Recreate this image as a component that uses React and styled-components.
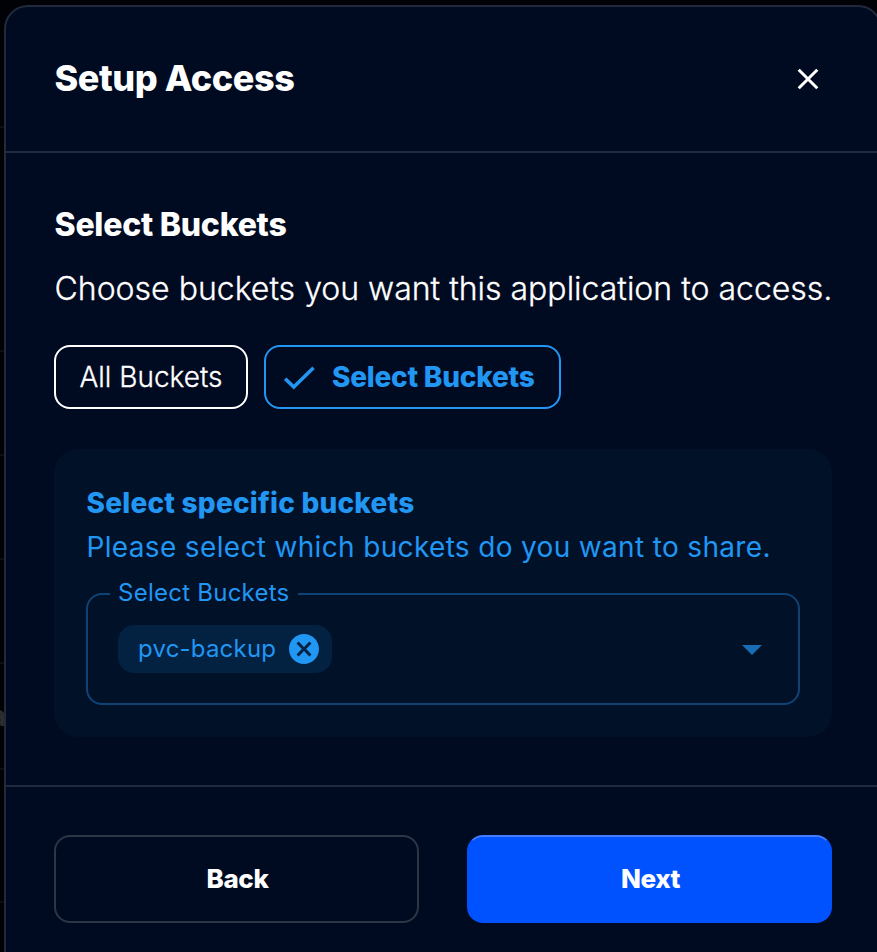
import React from "react";
import styled, { createGlobalStyle } from "styled-components";

const Global = createGlobalStyle`
  * { box-sizing: border-box; }
  html, body { margin: 0; background: #000205; overflow: hidden; }
  body { font-family: Inter, "Liberation Sans", sans-serif; color: #fff; }
`;

const Page = styled.div`
  position: relative;
  width: 877px;
  height: 952px;
  padding: 5px 0 0 4px;
  overflow: hidden;
  background: #000205;
`;

const Backdrop = styled.div`
  position: absolute;
  inset: 0 auto 0 0;
  width: 12px;
  overflow: hidden;
`;

const BackdropRule = styled.div`
  position: absolute;
  top: ${(p) => p.$top}px;
  width: 100%;
  height: 2px;
  background: #0b0d10;
`;

const BackdropText = styled.span`
  position: absolute;
  right: 6px;
  top: 700px;
  font-size: 28px;
  line-height: 32px;
  font-weight: 700;
  color: #2c2d2e;
`;

const Dialog = styled.section`
  position: relative;
  display: flex;
  flex-direction: column;
  width: 878px;
  height: 1010px;
  border: 2px solid #20293d;
  border-radius: 24px;
  background: #000a20;
`;

const Header = styled.header`
  display: flex;
  align-items: center;
  justify-content: space-between;
  height: 146px;
  padding: 0 48px;
  border-bottom: 2px solid #20293d;
`;

const Title = styled.h2`
  margin: 0;
  padding: 0 0 2px 0.5px;
  font-size: 36px;
  line-height: 48px;
  font-weight: 800;
  letter-spacing: -0.44px;
`;

const CloseButton = styled.button`
  display: flex;
  align-items: center;
  justify-content: center;
  width: 48px;
  height: 48px;
  padding: 0;
  border: 0;
  background: none;
  color: #fff;
`;

const Body = styled.div`
  height: 634px;
  padding: 48px;
  border-bottom: 2px solid #20293d;
`;

const Heading = styled.h3`
  margin: 0;
  padding-left: 0.5px;
  font-size: 32px;
  line-height: 48px;
  font-weight: 800;
  letter-spacing: -0.24px;
`;

const Lead = styled.p`
  margin: 16px 0 0;
  padding-left: 0.5px;
  font-size: 32px;
  line-height: 48px;
  font-weight: 300;
  -webkit-text-stroke: 0.3px currentColor;
  white-space: nowrap;
`;

const Options = styled.div`
  display: flex;
  gap: 16px;
  margin-top: 32px;
`;

const Option = styled.button`
  display: flex;
  align-items: center;
  justify-content: ${(p) => (p.$selected ? "flex-start" : "center")};
  width: ${(p) => (p.$selected ? 297 : 194)}px;
  height: 64px;
  padding: ${(p) => (p.$selected ? "0 0 0 12px" : "0")};
  gap: 12px;
  border: 2px solid ${(p) => (p.$selected ? "#2196f3" : "#fff")};
  border-radius: 16px;
  background: none;
  font: ${(p) => (p.$selected ? 800 : 300)} 28px Inter, sans-serif;
  -webkit-text-stroke: ${(p) => (p.$selected ? "0" : "0.3px currentColor")};
  letter-spacing: ${(p) => (p.$selected ? "-0.24px" : "0")};
  color: ${(p) => (p.$selected ? "#2196f3" : "#fff")};
  white-space: nowrap;
`;

const Panel = styled.div`
  height: 288px;
  margin-top: 40px;
  padding: 32px;
  border-radius: 24px;
  background: #001128;
  color: #2196f3;
`;

const PanelTitle = styled.h4`
  margin: 0;
  padding-left: 0.5px;
  font-size: 28px;
  line-height: 44px;
  font-weight: 800;
  letter-spacing: 0.22px;
`;

const PanelText = styled.p`
  margin: 0;
  padding-left: 0.5px;
  font-size: 28px;
  line-height: 44px;
  letter-spacing: 0.34px;
  white-space: nowrap;
`;

const Field = styled.fieldset`
  display: flex;
  align-items: center;
  justify-content: space-between;
  min-width: 0;
  height: 125px;
  margin: 11px 0 0;
  padding: 0 36px 14px 30px;
  border: 2px solid #0f4376;
  border-radius: 16px;
`;

const Legend = styled.legend`
  height: 28px;
  margin-left: -8px;
  padding: 0 8px;
  width: 188px;
  white-space: nowrap;
  font-size: 24px;
  line-height: 26px;
  letter-spacing: 0.25px;
`;

const Tag = styled.span`
  display: flex;
  align-items: center;
  justify-content: space-between;
  width: 214px;
  height: 48px;
  padding: 0 10px 0 20px;
  border-radius: 16px;
  background: #032140;
  font-size: 24px;
  letter-spacing: 0.2px;
`;

const TagLabel = styled.span`
  padding-bottom: 1px;
`;

const Footer = styled.footer`
  display: flex;
  gap: 48px;
  padding: 48px;
`;

const Action = styled.button`
  flex: 1;
  height: 88px;
  padding: 0 0 2px 2px;
  border: 2px solid ${(p) => (p.$primary ? "#0052ff" : "#2d3646")};
  border-top-color: ${(p) => (p.$primary ? "#407dff" : "#2d3646")};
  border-radius: 16px;
  background: ${(p) => (p.$primary ? "#0052ff" : "transparent")};
  font: 800 26px Inter, sans-serif;
  letter-spacing: -0.4px;
  color: #fff;
`;

const CloseIcon = () => (
  <svg width="24" height="24" viewBox="0 0 24 24" fill="none" stroke="currentColor" strokeWidth="3">
    <path d="M2.7 2.7 21.3 21.3M21.3 2.7 2.7 21.3" />
  </svg>
);

const CheckIcon = () => (
  <svg width="42" height="41" viewBox="0 0 24 24" fill="currentColor" preserveAspectRatio="none">
    <path d="M9 16.17 4.83 12l-1.42 1.41L9 19 21 7l-1.41-1.41z" />
  </svg>
);

const RemoveIcon = () => (
  <svg width="36" height="36" viewBox="0 0 24 24" fill="currentColor">
    <path d="M12 2C6.47 2 2 6.47 2 12s4.47 10 10 10 10-4.47 10-10S17.53 2 12 2zm5 13.59L15.59 17 12 13.41 8.41 17 7 15.59 10.59 12 7 8.41 8.41 7 12 10.59 15.59 7 17 8.41 13.41 12 17 15.59z" />
  </svg>
);

const CaretIcon = () => (
  <svg width="20" height="12" viewBox="0 0 20 12" fill="#196db4">
    <path d="M0 2h20L10 12z" />
  </svg>
);

const rules = [126, 350, 454, 558, 662, 768, 901];

export default function App() {
  return (
    <Page>
      <Global />
      <Backdrop>
        {rules.map((top) => (
          <BackdropRule key={top} $top={top} />
        ))}
        <BackdropText>a</BackdropText>
      </Backdrop>
      <Dialog>
        <Header>
          <Title>Setup Access</Title>
          <CloseButton aria-label="Close">
            <CloseIcon />
          </CloseButton>
        </Header>
        <Body>
          <Heading>Select Buckets</Heading>
          <Lead>Choose buckets you want this application to access.</Lead>
          <Options>
            <Option>All Buckets</Option>
            <Option $selected>
              <CheckIcon />
              Select Buckets
            </Option>
          </Options>
          <Panel>
            <PanelTitle>Select specific buckets</PanelTitle>
            <PanelText>Please select which buckets do you want to share.</PanelText>
            <Field>
              <Legend>Select Buckets</Legend>
              <Tag>
                <TagLabel>pvc-backup</TagLabel>
                <RemoveIcon />
              </Tag>
              <CaretIcon />
            </Field>
          </Panel>
        </Body>
        <Footer>
          <Action>Back</Action>
          <Action $primary>Next</Action>
        </Footer>
      </Dialog>
    </Page>
  );
}
